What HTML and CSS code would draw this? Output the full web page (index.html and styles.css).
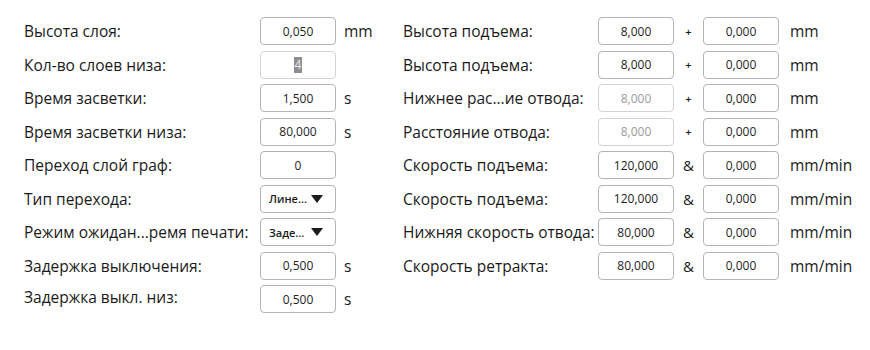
FILE: index.html
```html
<!DOCTYPE html>
<html lang="ru">
<head>
<meta charset="UTF-8">
<meta name="viewport" content="width=device-width, initial-scale=1.0">
<title>Параметры печати</title>
<link rel="stylesheet" href="styles.css">
</head>
<body>

<div class="settings">
  <!-- Левая колонка: параметры слоя -->
  <div class="panel panel-left">
    <div class="row">
      <span class="label">Высота слоя:</span>
      <input class="field" type="text" value="0,050">
      <span class="unit">mm</span>
    </div>
    <div class="row">
      <span class="label">Кол-во слоев низа:</span>
      <div class="field field-disabled"><span class="selected">4</span></div>
      <span class="unit"></span>
    </div>
    <div class="row">
      <span class="label">Время засветки:</span>
      <input class="field" type="text" value="1,500">
      <span class="unit">s</span>
    </div>
    <div class="row">
      <span class="label">Время засветки низа:</span>
      <input class="field" type="text" value="80,000">
      <span class="unit">s</span>
    </div>
    <div class="row">
      <span class="label">Переход слой граф:</span>
      <input class="field" type="text" value="0">
      <span class="unit"></span>
    </div>
    <div class="row">
      <span class="label">Тип перехода:</span>
      <div class="field dropdown"><span>Лине...</span><span class="arrow"></span></div>
      <span class="unit"></span>
    </div>
    <div class="row">
      <span class="label">Режим ожидан...ремя печати:</span>
      <div class="field dropdown"><span>Заде...</span><span class="arrow"></span></div>
      <span class="unit"></span>
    </div>
    <div class="row">
      <span class="label">Задержка выключения:</span>
      <input class="field" type="text" value="0,500">
      <span class="unit">s</span>
    </div>
    <div class="row">
      <span class="label label-up">Задержка выкл. низ:</span>
      <input class="field" type="text" value="0,500">
      <span class="unit">s</span>
    </div>
  </div>

  <!-- Правая колонка: подъем и отвод -->
  <div class="panel panel-right">
    <div class="row">
      <span class="label">Высота подъема:</span>
      <input class="field" type="text" value="8,000">
      <span class="sep">+</span>
      <input class="field" type="text" value="0,000">
      <span class="unit">mm</span>
    </div>
    <div class="row">
      <span class="label">Высота подъема:</span>
      <input class="field" type="text" value="8,000">
      <span class="sep">+</span>
      <input class="field" type="text" value="0,000">
      <span class="unit">mm</span>
    </div>
    <div class="row">
      <span class="label">Нижнее рас...ие отвода:</span>
      <input class="field field-disabled" type="text" value="8,000" disabled>
      <span class="sep">+</span>
      <input class="field" type="text" value="0,000">
      <span class="unit">mm</span>
    </div>
    <div class="row">
      <span class="label">Расстояние отвода:</span>
      <input class="field field-disabled" type="text" value="8,000" disabled>
      <span class="sep">+</span>
      <input class="field" type="text" value="0,000">
      <span class="unit">mm</span>
    </div>
    <div class="row">
      <span class="label">Скорость подъема:</span>
      <input class="field" type="text" value="120,000">
      <span class="sep amp">&amp;</span>
      <input class="field" type="text" value="0,000">
      <span class="unit">mm/min</span>
    </div>
    <div class="row">
      <span class="label">Скорость подъема:</span>
      <input class="field" type="text" value="120,000">
      <span class="sep amp">&amp;</span>
      <input class="field" type="text" value="0,000">
      <span class="unit">mm/min</span>
    </div>
    <div class="row">
      <span class="label">Нижняя скорость отвода:</span>
      <input class="field" type="text" value="80,000">
      <span class="sep amp">&amp;</span>
      <input class="field" type="text" value="0,000">
      <span class="unit">mm/min</span>
    </div>
    <div class="row">
      <span class="label">Скорость ретракта:</span>
      <input class="field" type="text" value="80,000">
      <span class="sep amp">&amp;</span>
      <input class="field" type="text" value="0,000">
      <span class="unit">mm/min</span>
    </div>
  </div>
</div>

</body>
</html>
```

FILE: styles.css
```css
body {
  font-family: "Open Sans", "Noto Sans", sans-serif;
  margin: 0;
  padding: 0;
  background-color: #fff;
  color: #1a1a1a;
}

.settings {
  display: flex;
  padding-top: 17px;
}

.panel {
  display: flex;
  flex-direction: column;
  gap: 5.5px;
}

.panel-left {
  padding-left: 24px;
  width: 379px;
}

.row {
  display: flex;
  align-items: center;
  height: 28px;
}

.label {
  font-size: 15.5px;
  white-space: nowrap;
}

.label-up {
  position: relative;
  top: -2px;
}

.panel-left .label {
  width: 236px;
}

.panel-right .label {
  width: 195px;
}

.field {
  box-sizing: border-box;
  width: 76px;
  height: 28px;
  border: 1px solid #b4b4b4;
  border-radius: 4px;
  background: #fff;
  font-family: inherit;
  font-size: 12px;
  color: #1e1e1e;
  text-align: center;
  padding: 0;
  outline: none;
}

div.field {
  display: flex;
  align-items: center;
  justify-content: center;
}

.field-disabled {
  border-color: #d2d2d2;
  color: #9a9a9a;
}

input.field-disabled {
  background: #fff;
}

.selected {
  background-color: #8e8e8e;
  color: #f0f0f0;
  font-size: 12px;
  padding: 0 1px;
  line-height: 16px;
}

.dropdown {
  justify-content: flex-start !important;
  padding-left: 8px;
  padding-right: 12px;
  font-size: 11px;
  font-weight: 600;
  color: #1a1a1a;
}

.arrow {
  width: 0;
  height: 0;
  margin-left: auto;
  border-left: 6px solid transparent;
  border-right: 6px solid transparent;
  border-top: 8px solid #1a1a1a;
}

.unit {
  font-size: 15.5px;
  margin-left: 8px;
}

.panel-right .unit {
  margin-left: 11px;
}

.sep {
  width: 29px;
  text-align: center;
  font-size: 11px;
  font-weight: 600;
}

.sep.amp {
  font-size: 15px;
  font-weight: 400;
}
```
